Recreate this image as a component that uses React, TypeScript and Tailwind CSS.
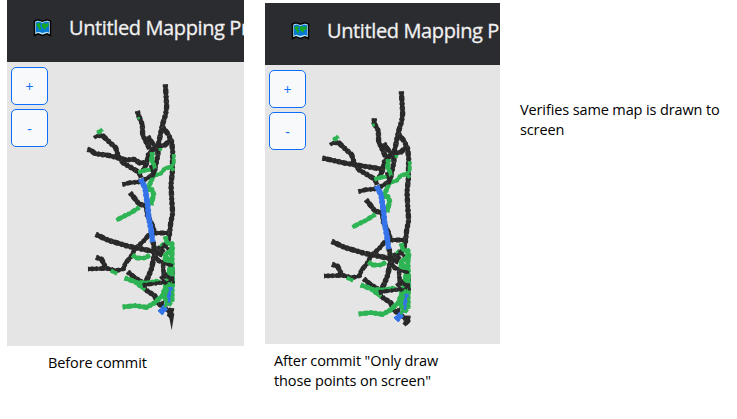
import React from "react";

type Line = { c: "k" | "g" | "b"; w?: number; p: string };

const colors = { k: "#292929", g: "#2eb454", b: "#3474e8" };

// Cave passages, in thirds of a pixel. Later lines are drawn on top.
const shared: Line[] = [
  { c: "k", p: "M271 28L273 60L275 95L272 118L262 150L258 170L253 195L248 215L249 240L242 270L235 300" },
  { c: "k", p: "M262 155L280 178L290 200L293 230L292 290L288 330L290 370L293 415L287 445L284 475L278 500" },
  { c: "k", p: "M288 193L270 210L250 215L232 225L220 240L216 262L203 290" },
  { c: "k", p: "M218 184L230 202L243 217" },
  { c: "k", p: "M70 181L84 183L105 203L122 218L130 244L145 264L172 280L192 292L198 308" },
  { c: "k", w: 12, p: "M142 329L165 323L190 321L215 311L238 297" },
  { c: "k", p: "M165 353L178 369L192 387L213 393" },
  { c: "k", p: "M214 384L217 420L234 456L239 476" },
  { c: "k", w: 14, p: "M62 478L100 496L160 514L200 522L240 530L263 540" },
  { c: "k", w: 12, p: "M282 474L246 474L222 479L205 499L180 522L168 545L151 565L146 581L125 587L95 580L70 581L39 582" },
  { c: "k", p: "M63 547L80 553L91 576" },
  { c: "k", w: 14, p: "M234 500L240 530L230 580L220 605L208 629" },
  { c: "k", p: "M158 590L175 605L200 621L211 644L240 663L245 682L263 694L290 715" },
  { c: "k", w: 11, p: "M240 540L251 558L280 565L294 585L291 613L267 605L264 568" },
  { c: "g", w: 13, p: "M232 232L230 255L238 275L237 300L228 319L217 345L231 344L236 358L228 390" },
  { c: "g", w: 11, p: "M190 292L210 286L236 283L239 300L256 297L270 280L288 276" },
  { c: "g", w: 9, p: "M296 238L296 265L288 276L296 287" },
  { c: "g", w: 12, p: "M193 397L165 415L144 425L124 436" },
  { c: "g", w: 12, p: "M172 540L185 549L210 549L225 540" },
  { c: "g", w: 10, p: "M108 587L126 596" },
  { c: "g", w: 13, p: "M149 609L180 620L202 637" },
  { c: "g", w: 9, p: "M180 621L220 622L245 617L264 625M190 630L210 644" },
  { c: "g", w: 13, p: "M143 696L180 692L215 697L238 684L262 662L272 636L274 615" },
  { c: "g", w: 13, p: "M271 484L276 505L291 506L292 525L275 535L269 552L286 570L280 602L281 645L272 676L290 690" },
  { c: "g", w: 14, p: "M290 515L292 610L290 680M272 640L267 672" },
  { c: "g", w: 9, p: "M248 523L266 505M266 537L285 556" },
  { c: "k", w: 7, p: "M246 523L278 512M264 505L280 523M269 530L247 515M254 523L267 531" },
  { c: "k", w: 8, p: "M250 555L265 566M263 565L294 572M264 580L265 603L295 610M268 594L292 617M257 604L270 624L288 620" },
  { c: "k", w: 10, p: "M205 630L240 626L270 621" },
  { c: "k", w: 7, p: "M226 271L234 293L222 304M244 281L235 302L214 310" },
  { c: "k", w: 6, p: "M209 638L205 624M292 604L296 625M262 678L267 697" },
  { c: "k", w: 13, p: "M61 180L66 190" },
  { c: "g", w: 11, p: "M70 173L82 163M72 166L71 177" },
  { c: "b", w: 15, p: "M197 312L210 338L218 390L221 427L228 463L233 501" },
  { c: "b", w: 10, p: "M286 636L288 648L281 665L281 681L270 693" },
  { c: "b", w: 17, p: "M255 714L272 696" },
  { c: "g", w: 6, p: "M281 622L286 633M292 647L294 675M276 670L271 697M276 685L285 690" },
  { c: "g", w: 8, p: "M256 219L256 227" },
];

const before: Line[] = [
  { c: "k", p: "M187 108L191 122L202 148L203 180L213 200L224 221" },
  { c: "k", p: "M37 223L48 226L60 236L100 241L130 249L155 255L178 253L194 264L217 262" },
  { c: "k", w: 13, p: "M290 699L288 717L280 726" },
  { c: "g", w: 5, p: "M190 126L192 133" },
];

const after: Line[] = [
  { c: "k", p: "M190 109L189 123L202 146L203 180L213 200L224 225" },
  { c: "k", p: "M34 228L100 243L130 248L180 256L217 262" },
  { c: "k", w: 13, p: "M291 701L291 716L279 729" },
  { c: "g", w: 5, p: "M187 125L188 133" },
  { c: "g", w: 8, p: "M285 508L296 518L289 548" },
];

function Survey({ revised = false }: { revised?: boolean }) {
  const lines = [...(revised ? after : before), ...shared];
  return (
    <svg
      className="pointer-events-none absolute inset-0"
      width={revised ? 235 : 237}
      height={revised ? 341 : 346}
      viewBox={revised ? "0 0 235 341" : "0 0 237 346"}
      fill="none"
    >
      <g transform={revised ? "translate(46 79) scale(.333333)" : "translate(68 75) scale(.333333)"}>
        {lines.map((l, i) => (
          <g key={i} strokeLinejoin="round">
            <path d={l.p} stroke={colors[l.c]} strokeWidth={l.w ?? 13.5} />
            <path d={l.p} stroke={colors[l.c]} strokeWidth={(l.w ?? 13.5) + 2.5} strokeDasharray="8 6 13 8 5 7" />
            {l.c === "k" && (
              <path d={l.p} stroke="#888888" strokeOpacity=".4" strokeWidth="11" strokeDasharray="1.5 31 1 18 1.5 54" />
            )}
          </g>
        ))}
        {!revised && <path d="M280 716L298 716L290 766L283 728Z" fill="#292929" />}
      </g>
    </svg>
  );
}

function MapIcon() {
  return (
    <svg width="19" height="18" viewBox="0 0 19 18" className="shrink-0">
      <path d="M1.5 2L5 .8L9.5 2.2L14 .8L17.5 2V16.5L14 14.8L9.5 16.4L5 14.8L1.5 16.5Z" fill="#bce6f5" stroke="#050505" strokeWidth="1.5" />
      <path d="M3 3.3L6 2.5L9.5 3.9L13 2.5L16 3.3V13.6L13.5 12.7L9.5 14L5.5 12.7L3 13.6Z" fill="#0878d8" />
      <path d="M3.5 5L6 3.8L8 4.8L7 7L8.2 9L7 12L5.8 10L5 7.5L3.5 7ZM9 5L11 3.8L12 5L15.5 4V7L14 8.5L13 7.5L12.5 11L10.5 9.5L9 8Z" fill="#18a826" />
    </svg>
  );
}

function MapPanel({ revised = false }: { revised?: boolean }) {
  return (
    <section className={revised ? "relative mt-[3px] h-[341px] w-[235px] overflow-hidden bg-[#e5e5e5]" : "relative h-[346px] w-[237px] overflow-hidden bg-[#e5e5e5]"}>
      <header className="flex h-[62px] items-center bg-[#2b2c30] pb-[6px] pl-[26px]">
        <MapIcon />
        <span className="ml-[17px] whitespace-nowrap text-[20px] leading-[28px] tracking-[-0.38px] text-[#f1f1f1] [-webkit-text-stroke:0.3px_#f1f1f1]">Untitled Mapping Project</span>
      </header>
      <div className="flex flex-col items-start gap-1 pl-1 pt-[5px]">
        {["+", "-"].map((label) => (
          <button key={label} className="h-[38px] w-[37px] rounded-[5px] border border-[#0d6efd] bg-[#f8f9fa] pt-[2px] text-[14px] leading-none text-[#0d6efd]">
            {label}
          </button>
        ))}
      </div>
      <Survey revised={revised} />
    </section>
  );
}

export default function App() {
  return (
    <main className="flex h-[419px] w-[737px] overflow-hidden bg-white pl-[7px] font-['Open_Sans','Noto_Sans',sans-serif] text-[14.5px] leading-5 text-black">
      <div className="w-[237px] shrink-0">
        <MapPanel />
        <p className="ml-[41px] mt-[7px] whitespace-nowrap tracking-[-0.12px]">Before commit</p>
      </div>
      <div className="ml-[21px] w-[235px] shrink-0">
        <MapPanel revised />
        <p className="ml-[9px] mt-[7px] whitespace-nowrap tracking-[-0.12px]">After commit "Only draw<br />those points on screen"</p>
      </div>
      <p className="ml-5 mt-[100px] whitespace-nowrap tracking-[-0.12px]">Verifies same map is drawn to<br />screen</p>
    </main>
  );
}
